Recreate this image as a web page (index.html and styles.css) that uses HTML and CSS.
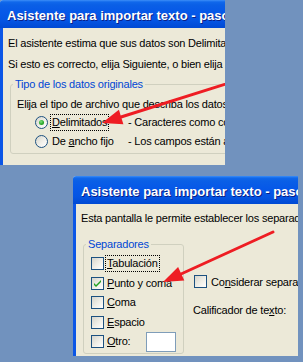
FILE: index.html
```html
<!DOCTYPE html>
<html lang="es">
<head>
<meta charset="utf-8">
<title>Asistente para importar texto</title>
<link rel="stylesheet" href="styles.css">
</head>
<body>
<div class="win win1">
  <div class="title">Asistente para importar texto - paso 1 de 3</div>
  <div class="body body1">
    <p class="txt t1">El asistente estima que sus datos son Delimitados.</p>
    <p class="txt t2">Si esto es correcto, elija Siguiente, o bien elija el tipo de datos que mejor los describa.</p>
    <fieldset class="grp grp1">
      <legend>Tipo de los datos originales</legend>
      <p class="txt t3">Elija el tipo de archivo que describa los datos con mayor precisión:</p>
      <div class="rrow">
        <span class="radio on"></span>
        <span class="rlabel"><span class="focus"><u>D</u>elimitados</span></span>
        <span class="desc">- Caracteres como comas o tabulaciones separan campos.</span>
      </div>
      <div class="rrow">
        <span class="radio"></span>
        <span class="rlabel"><span class="nofocus">De <u>a</u>ncho fijo</span></span>
        <span class="desc">- Los campos están alineados en columnas con espacios entre uno y otro.</span>
      </div>
    </fieldset>
  </div>
  <svg class="arrow" width="225" height="165" viewBox="0 0 225 165">
    <line x1="245" y1="78" x2="121" y2="117" />
    <polygon points="102,123 123.4,124.2 118.9,109.8" />
  </svg>
</div>

<div class="win win2">
  <div class="title">Asistente para importar texto - paso 2 de 3</div>
  <div class="body body2">
    <p class="txt t4">Esta pantalla le permite establecer los separadores contenidos en los datos.</p>
    <div class="cols">
      <fieldset class="grp grp2">
        <legend>Separadores</legend>
        <div class="cblist">
          <div class="crow">
            <span class="cb"></span>
            <span class="clabel"><span class="focus"><u>T</u>abulación</span></span>
          </div>
          <div class="crow">
            <span class="cb"><svg class="check" width="11" height="11" viewBox="0 0 11 11"><path d="M2 5 L4 7 L9 2 L9 4 L4 9 L2 7 Z" /></svg></span>
            <span class="clabel"><span class="nofocus"><u>P</u>unto y coma</span></span>
          </div>
          <div class="crow">
            <span class="cb"></span>
            <span class="clabel"><span class="nofocus"><u>C</u>oma</span></span>
          </div>
          <div class="crow">
            <span class="cb"></span>
            <span class="clabel"><span class="nofocus"><u>E</u>spacio</span></span>
          </div>
          <div class="crow">
            <span class="cb"></span>
            <span class="clabel otro"><span class="nofocus"><u>O</u>tro:</span></span>
            <span class="tbox"></span>
          </div>
        </div>
      </fieldset>
      <div class="right">
        <div class="crow">
          <span class="cb"></span>
          <span class="clabel wide">Co<u>n</u>siderar separadores consecutivos como uno solo</span>
        </div>
        <p class="txt calif">Calificador de te<u>x</u>to:</p>
      </div>
    </div>
  </div>
  <svg class="arrow" width="225" height="180" viewBox="0 0 225 180">
    <line x1="200" y1="56" x2="108" y2="98" />
    <polygon points="90,106 111.3,104.5 105.1,90.9" />
  </svg>
</div>
</body>
</html>
```

FILE: styles.css
```css
* { box-sizing: border-box; }
html, body { margin: 0; padding: 0; }
body {
  background: #7192be;
  width: 303px;
  height: 362px;
  overflow: hidden;
  font-family: "Liberation Sans", Arial, sans-serif;
  font-size: 11px;
  color: #000;
}
.win {
  position: relative;
  overflow: hidden;
  background: #ece9d8;
  display: flex;
  flex-direction: column;
  border-top-left-radius: 3px;
}
.win1 { width: 225px; height: 165px; }
.win2 { width: 225px; height: 180px; margin: 11px 0 0 73px; }
.title {
  flex: none;
  height: 28px;
  padding: 8px 0 0 7px;
  line-height: 16px;
  font-size: 13px;
  font-weight: bold;
  color: #fff;
  white-space: nowrap;
  text-shadow: 1px 1px 0 #0a1f86;
  background: linear-gradient(#3d8ef7 0, #1068eb 2px, #0a5fe6 5px, #0658e8 45%, #0454e2 75%, #0049d3 100%);
}
.win2 .title { padding-left: 8px; }
.body {
  flex: 1;
  border-left: 3px solid #0b56e6;
  padding-left: 5px;
  white-space: nowrap;
  letter-spacing: -0.2px;
}
.txt { margin: 0; line-height: 13px; }
.t1 { margin-top: 9px; }
.t2 { margin-top: 7.5px; }
.grp {
  margin: 0;
  border: 1px solid #d0d0bf;
  border-radius: 3px;
  min-width: 0;
}
.grp legend {
  padding: 0 2px;
  line-height: 13px;
  color: #0046d5;
}
.grp1 {
  margin: 7.8px 0 0 2px;
  width: 260px;
  padding: 0 0 2px 6px;
}
.grp1 legend { margin-left: -4px; }
.t3 { margin-top: 6.5px; }
.rrow {
  display: flex;
  align-items: center;
  height: 19px;
  padding-left: 18px;
}
.t3 + .rrow { margin-top: 2px; }
.radio {
  flex: none;
  width: 13px;
  height: 13px;
  border-radius: 50%;
  border: 1px solid #1c5180;
  background: linear-gradient(135deg, #d6d5cc 0%, #f1f0ea 55%, #ffffff 100%);
  display: flex;
  align-items: center;
  justify-content: center;
}
.radio.on::after {
  content: "";
  width: 5px;
  height: 5px;
  border-radius: 50%;
  background: radial-gradient(circle at 40% 35%, #7fe07f 0, #2aa82a 55%, #1b8a1b 100%);
}
.rlabel {
  flex: none;
  width: 78px;
  margin-left: 2px;
}
.focus, .nofocus {
  display: inline-block;
  line-height: 13px;
  padding: 1px;
  border: 1px dotted transparent;
}
.focus { border-color: #000; }
.desc { flex: none; }
.t4 { margin-top: 8px; }
.cols {
  display: flex;
  align-items: flex-start;
  margin-top: 12.5px;
}
.grp2 {
  margin: 0 0 0 2px;
  width: 101px;
  padding: 0 0 1.75px 7px;
  flex: none;
}
.grp2 legend { margin-left: -5px; }
.cblist { padding-top: 3.25px; }
.crow {
  display: flex;
  align-items: center;
  height: 19.5px;
}
.cb {
  flex: none;
  width: 13px;
  height: 13px;
  border: 1px solid #1c5180;
  background: linear-gradient(135deg, #d6d5cc 0%, #f0efe8 55%, #ffffff 100%);
  display: flex;
  align-items: center;
  justify-content: center;
}
.check { fill: #21a121; display: block; }
.clabel { margin-left: 1px; }
.clabel.otro { width: 41px; flex: none; }
.clabel.wide { margin-left: 4px; }
.tbox {
  flex: none;
  width: 30px;
  height: 20px;
  background: #fff;
  border: 1px solid #7f9db9;
}
.right {
  margin-left: 10px;
  padding-top: 34.25px;
}
.calif { margin-top: 12.75px; margin-left: -1px; }
.arrow {
  position: absolute;
  left: 0;
  top: 0;
  pointer-events: none;
}
.arrow line { stroke: #ee1d23; stroke-width: 3; stroke-linecap: round; }
.arrow polygon { fill: #ee1d23; }
```
